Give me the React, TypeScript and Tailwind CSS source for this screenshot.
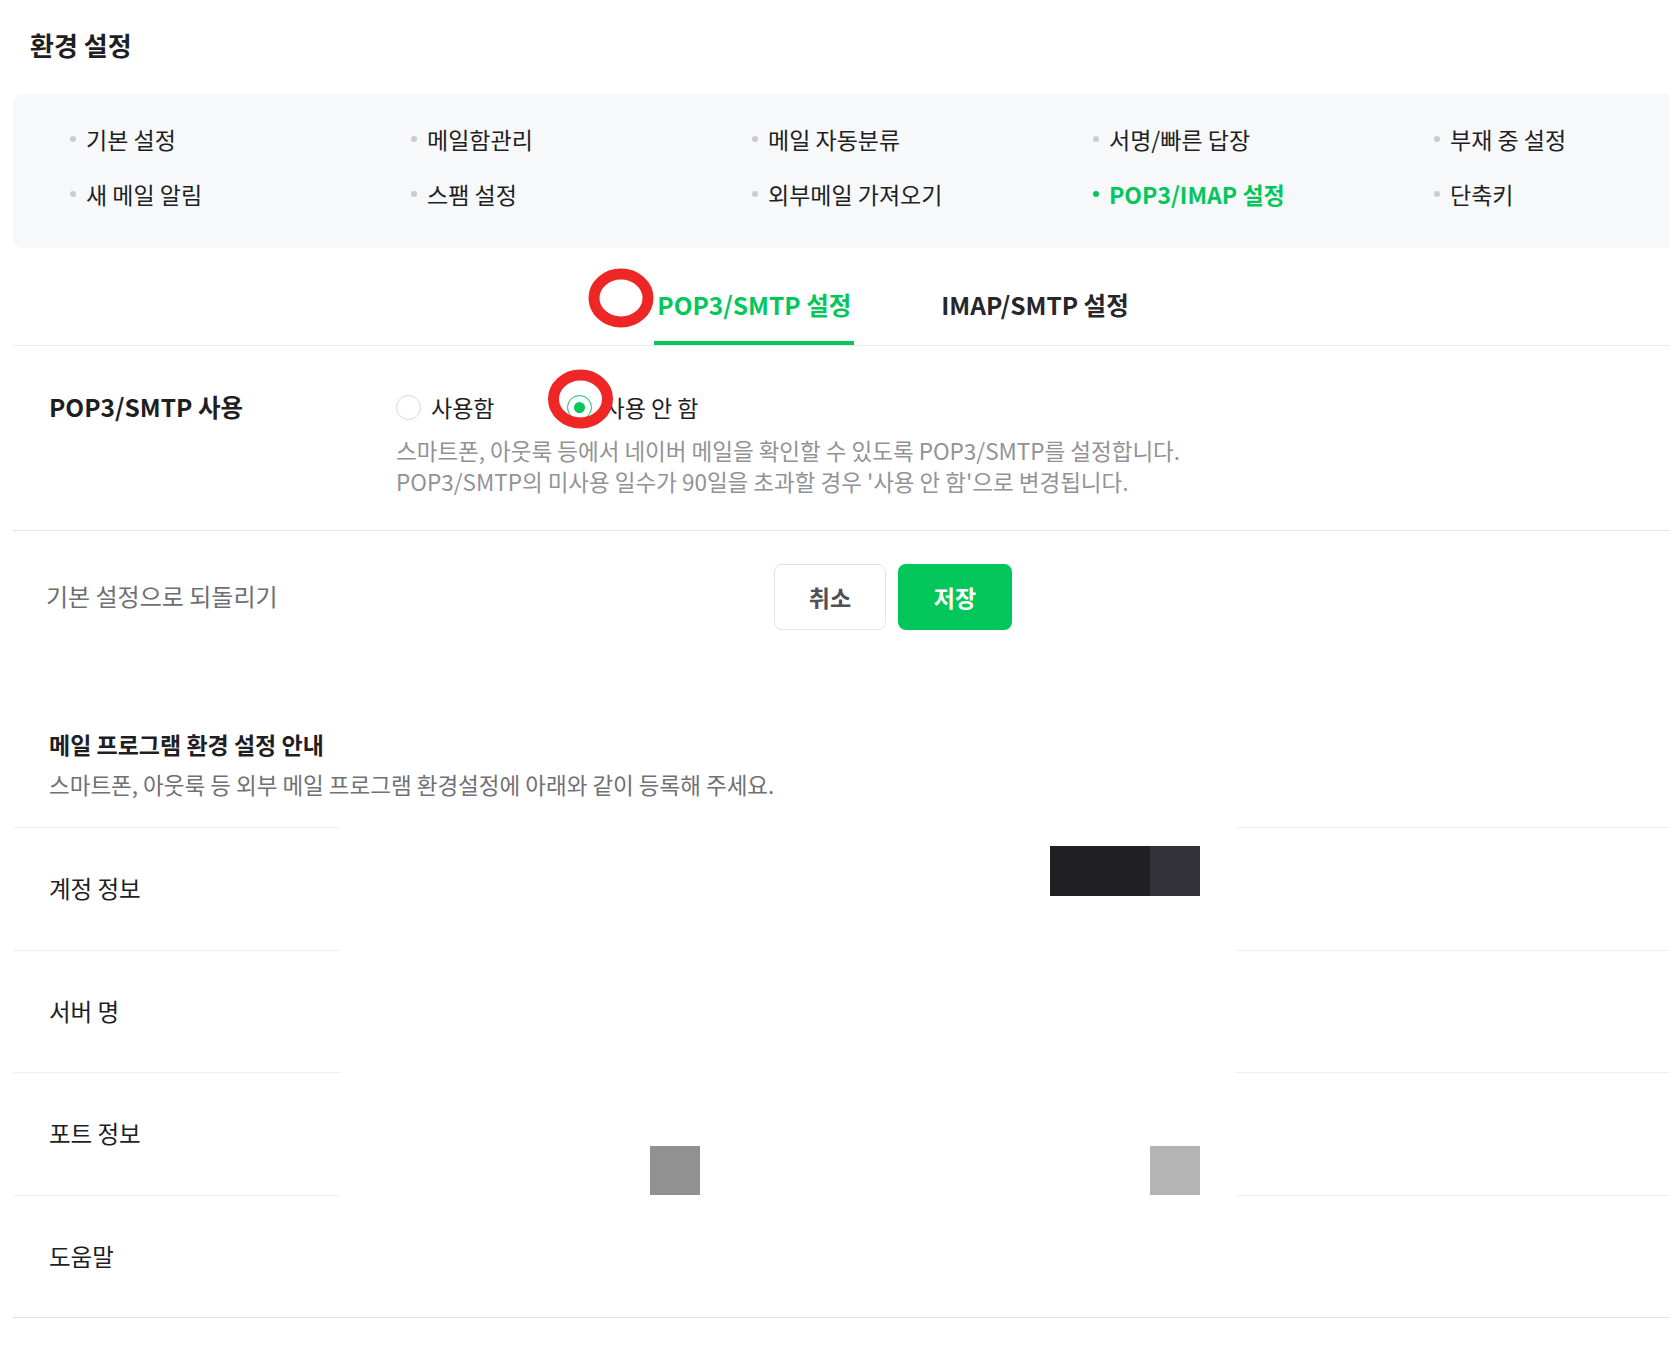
import React from "react";

const navItems: { label: string; active?: boolean }[] = [
  { label: "기본 설정" },
  { label: "메일함관리" },
  { label: "메일 자동분류" },
  { label: "서명/빠른 답장" },
  { label: "부재 중 설정" },
  { label: "새 메일 알림" },
  { label: "스팸 설정" },
  { label: "외부메일 가져오기" },
  { label: "POP3/IMAP 설정", active: true },
  { label: "단축키" },
];

function RedRing({ className }: { className: string }) {
  return (
    <svg className={className} viewBox="0 0 66 60" fill="none">
      <ellipse cx="33" cy="30" rx="27" ry="24" stroke="#ee2626" strokeWidth="11" />
    </svg>
  );
}

export default function App() {
  return (
    <div className="relative w-full min-h-[1346px] overflow-hidden bg-white font-['Noto_Sans_CJK_KR','Noto_Sans',sans-serif] text-[#1e1e23]">
      <div className="ml-[13px] w-[1760px]">
        {/* Title */}
        <div className="pt-[28px] pl-[17px] text-[26px] font-bold leading-[34px]">환경 설정</div>

        {/* Nav box */}
        <div className="mt-[32px] h-[154px] rounded-[10px] bg-[#f7f8fa] pl-[57px] pt-[30px]">
          <div className="grid grid-cols-[repeat(5,341px)] gap-y-[25px]">
            {navItems.map((it) => (
              <div key={it.label} className="flex items-center gap-[10px] h-[30px]">
                <span
                  className={
                    it.active
                      ? "h-[6px] w-[6px] rounded-full bg-[#03c75a]"
                      : "h-[6px] w-[6px] rounded-full bg-[#c9ccd4]"
                  }
                />
                <span
                  className={
                    it.active
                      ? "text-[23px] leading-[30px] font-bold text-[#03c75a]"
                      : "text-[23px] leading-[30px] text-[#1e1e23]"
                  }
                >
                  {it.label}
                </span>
              </div>
            ))}
          </div>
        </div>

        {/* Tabs */}
        <div className="mt-[42px] flex justify-center gap-[84px] border-b border-[#ebebeb]">
          <div className="border-b-[4px] border-[#03c75a] px-[3px] pb-[21px] text-[24.5px] font-bold leading-[30px] text-[#03c75a]">
            POP3/SMTP 설정
          </div>
          <div className="border-b-[4px] border-transparent px-[3px] pb-[21px] text-[24.5px] font-bold leading-[30px] text-[#26262b]">
            IMAP/SMTP 설정
          </div>
        </div>

        {/* POP3/SMTP 사용 row */}
        <div className="flex border-b border-[#e4e4e4] pt-[46px] pb-[33px]">
          <div className="w-[383px] pl-[36px] text-[24.5px] font-bold leading-[30px]">POP3/SMTP 사용</div>
          <div className="flex flex-col">
            <div className="flex items-center h-[30px]">
              <label className="flex items-center gap-[10px]">
                <span className="h-[25px] w-[25px] rounded-full border-[1.5px] border-[#d6d8e4] bg-white" />
                <span className="text-[23px] leading-[30px]">사용함</span>
              </label>
              <label className="ml-[73px] flex items-center gap-[11px]">
                <span className="flex h-[25px] w-[25px] items-center justify-center rounded-full border-[1.5px] border-[#03c75a] bg-white">
                  <span className="h-[11px] w-[11px] rounded-full bg-[#03c75a]" />
                </span>
                <span className="text-[23px] leading-[30px]">사용 안 함</span>
              </label>
            </div>
            <div className="mt-[13px] text-[22.5px] leading-[31px] text-[#929296]">
              <p>스마트폰, 아웃룩 등에서 네이버 메일을 확인할 수 있도록 POP3/SMTP를 설정합니다.</p>
              <p>POP3/SMTP의 미사용 일수가 90일을 초과할 경우 '사용 안 함'으로 변경됩니다.</p>
            </div>
          </div>
        </div>

        {/* Buttons row */}
        <div className="grid grid-cols-[1fr_auto_1fr] items-center pt-[33px]">
          <div className="pl-[33px] pb-[2px] text-[24px] leading-[30px] text-[#6e6e73]">기본 설정으로 되돌리기</div>
          <div className="flex gap-[12px]">
            <button className="h-[66px] w-[112px] rounded-[8px] border border-[#e3e3e6] bg-white text-[23px] font-bold text-[#505055]">
              취소
            </button>
            <button className="h-[66px] w-[114px] rounded-[8px] bg-[#03c75a] text-[23px] font-bold text-white">
              저장
            </button>
          </div>
          <div />
        </div>

        {/* Guide section */}
        <div className="mt-[99px] pl-[36px]">
          <div className="text-[23px] font-bold leading-[30px]">메일 프로그램 환경 설정 안내</div>
          <div className="mt-[10px] text-[22.5px] leading-[30px] text-[#707075]">
            스마트폰, 아웃룩 등 외부 메일 프로그램 환경설정에 아래와 같이 등록해 주세요.
          </div>
        </div>

        {/* Table */}
        <div className="mt-[28px]">
          <div className="grid h-[123px] grid-cols-[328px_894px_1fr]">
            <div className="flex items-center border-t border-[#f0f0f2] pl-[36px] text-[23.5px]">계정 정보</div>
            <div className="flex pt-[19px]">
              <div className="ml-[709px] h-[50px] w-[100px] bg-[#202024]" />
              <div className="h-[50px] w-[50px] bg-[#333238]" />
            </div>
            <div className="border-t border-[#f0f0f2]" />
          </div>
          <div className="grid h-[122px] grid-cols-[328px_894px_1fr]">
            <div className="flex items-center border-t border-[#f0f0f2] pl-[36px] text-[23.5px]">서버 명</div>
            <div />
            <div className="border-t border-[#f0f0f2]" />
          </div>
          <div className="grid h-[123px] grid-cols-[328px_894px_1fr]">
            <div className="flex items-center border-t border-[#f0f0f2] pl-[36px] text-[23.5px]">포트 정보</div>
            <div className="flex items-end">
              <div className="ml-[309px] h-[49px] w-[50px] bg-[#919191]" />
              <div className="ml-[450px] h-[49px] w-[50px] bg-[#b4b4b4]" />
            </div>
            <div className="border-t border-[#f0f0f2]" />
          </div>
          <div className="grid h-[122px] grid-cols-[328px_894px_1fr]">
            <div className="flex items-center border-t border-[#f0f0f2] pl-[36px] text-[23.5px]">도움말</div>
            <div />
            <div className="border-t border-[#f0f0f2]" />
          </div>
          <div className="border-t border-[#e2e2e4]" />
        </div>
      </div>

      {/* Red annotation rings */}
      <RedRing className="absolute left-[588px] top-[268px] h-[60px] w-[66px]" />
      <RedRing className="absolute left-[547px] top-[369px] h-[60px] w-[67px]" />
    </div>
  );
}
